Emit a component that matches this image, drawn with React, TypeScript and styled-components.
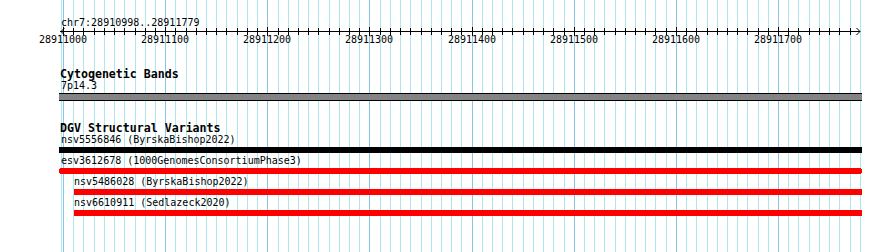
import React from "react";
import styled, { createGlobalStyle } from "styled-components";

const VIEW_START = 28910998;
const VIEW_END = 28911779;
const ORIGIN_X = 61;
const PX_PER_BP = 1.0214;
const CLIP_LEFT = 59;
const CLIP_RIGHT = 862;
const bpToX = (bp: number) => Math.round(ORIGIN_X + (bp - VIEW_START) * PX_PER_BP);

const FONT = `"DejaVu Sans Mono", "Liberation Mono", monospace`;

const GlobalStyle = createGlobalStyle`
  html, body { margin: 0; padding: 0; background: #ffffff; }
  body { font-family: ${FONT}; color: #000; overflow: hidden; }
`;

const Page = styled.div`
  position: relative;
  width: 890px;
  height: 252px;
  overflow: hidden;
  background: #ffffff;
`;

const GridLayer = styled.svg`
  position: absolute;
  top: 0;
  left: 0;
  z-index: 0;
`;

const Content = styled.div`
  position: relative;
  z-index: 1;
  display: flex;
  flex-direction: column;
`;

const RulerSvg = styled.svg`
  display: block;
  font-family: ${FONT};
  font-size: 10px;
`;

const Track = styled.section<{ $gap: number }>`
  display: flex;
  flex-direction: column;
  padding-left: ${CLIP_LEFT}px;
  margin-top: ${(p) => p.$gap}px;
`;

const TrackTitle = styled.h3`
  margin: 0;
  padding-left: 1px;
  font-family: ${FONT};
  font-weight: bold;
  font-size: 11.6px;
  line-height: 12px;
  height: 12px;
  white-space: nowrap;
`;

const FeatureRow = styled.div`
  display: flex;
  flex-direction: column;
  align-items: flex-start;
  height: 21px;
`;

const FeatureLabel = styled.div`
  font-size: 10px;
  line-height: 11px;
  height: 11px;
  white-space: nowrap;
`;

const Bar = styled.div<{ $color: string }>`
  position: relative;
  height: 6px;
  margin-top: 2px;
  background: ${(p) => p.$color};
`;

const Nub = styled.span<{ $side: "left" | "right"; $color: string }>`
  position: absolute;
  top: 1px;
  ${(p) => p.$side}: -1px;
  width: 1px;
  height: 4px;
  background: ${(p) => p.$color};
`;

const BandLabel = styled(FeatureLabel)`
  padding-left: 2px;
`;

const Band = styled.div`
  width: ${CLIP_RIGHT - CLIP_LEFT}px;
  height: 6px;
  margin-top: 2px;
  border-top: 1px solid #000;
  border-bottom: 1px solid #000;
  background: #848484;
`;

type Feature = { name: string; source: string; start: number; end: number; color: string; nubs?: boolean };

const features: Feature[] = [
  { name: "nsv5556846", source: "ByrskaBishop2022", start: 28910900, end: 28912000, color: "#000000" },
  { name: "esv3612678", source: "1000GenomesConsortiumPhase3", start: 28910900, end: 28912000, color: "#ff0000", nubs: true },
  { name: "nsv5486028", source: "ByrskaBishop2022", start: 28911011, end: 28912000, color: "#ff0000" },
  { name: "nsv6610911", source: "Sedlazeck2020", start: 28911011, end: 28912000, color: "#ff0000" },
];

const majorTicks: number[] = [];
const minorTicks: number[] = [];
for (let bp = 28911000; bp <= 28911770; bp += 10) {
  if (bp % 100 === 0) majorTicks.push(bp);
  else minorTicks.push(bp);
}

function Grid() {
  const lines: { x: number; major: boolean }[] = [{ x: 61, major: false }];
  for (let bp = 28911000; bp <= 28911780; bp += 10) {
    lines.push({ x: bpToX(bp), major: bp % 100 === 0 });
  }
  return (
    <GridLayer width={890} height={252} aria-hidden="true">
      {lines.map((l, i) => (
        <rect key={i} x={l.x} y={0} width={1} height={252} fill={l.major ? "#86c6e6" : "#aee8ee"} />
      ))}
    </GridLayer>
  );
}

function Ruler() {
  return (
    <RulerSvg width={890} height={48}>
      <text x={61} y={26} fill="#000">{`chr7:${VIEW_START}..${VIEW_END}`}</text>
      <rect x={60} y={31} width={800} height={1} fill="#000" />
      <polyline points="64.5,28 61,31.5 64.5,35" fill="none" stroke="#000" strokeWidth={1} />
      <polyline points="856.5,28 860,31.5 856.5,35" fill="none" stroke="#000" strokeWidth={1} />
      {minorTicks.map((bp) => (
        <rect key={bp} x={bpToX(bp)} y={28} width={1} height={7} fill="#000" />
      ))}
      {majorTicks.map((bp) => (
        <g key={bp}>
          <rect x={bpToX(bp)} y={27} width={1} height={9} fill="#000" />
          <text x={bpToX(bp)} y={43} textAnchor="middle" fill="#000">
            {bp}
          </text>
        </g>
      ))}
    </RulerSvg>
  );
}

function FeatureTrackRow({ f }: { f: Feature }) {
  const barLeft = Math.max(bpToX(f.start), CLIP_LEFT + (f.nubs ? 1 : 0));
  const barRight = Math.min(bpToX(f.end), CLIP_RIGHT - (f.nubs ? 1 : 0));
  const labelLeft = Math.max(bpToX(f.start), 61);
  return (
    <FeatureRow>
      <FeatureLabel style={{ marginLeft: labelLeft - CLIP_LEFT }}>{`${f.name} (${f.source})`}</FeatureLabel>
      <Bar $color={f.color} style={{ marginLeft: barLeft - CLIP_LEFT, width: barRight - barLeft }}>
        {f.nubs && <Nub $side="left" $color={f.color} />}
        {f.nubs && <Nub $side="right" $color={f.color} />}
      </Bar>
    </FeatureRow>
  );
}

export default function App() {
  return (
    <Page>
      <GlobalStyle />
      <Grid />
      <Content>
        <Ruler />
        <Track $gap={20}>
          <TrackTitle>Cytogenetic Bands</TrackTitle>
          <BandLabel>7p14.3</BandLabel>
          <Band />
        </Track>
        <Track $gap={21}>
          <TrackTitle>DGV Structural Variants</TrackTitle>
          {features.map((f) => (
            <FeatureTrackRow key={f.name} f={f} />
          ))}
        </Track>
      </Content>
    </Page>
  );
}
